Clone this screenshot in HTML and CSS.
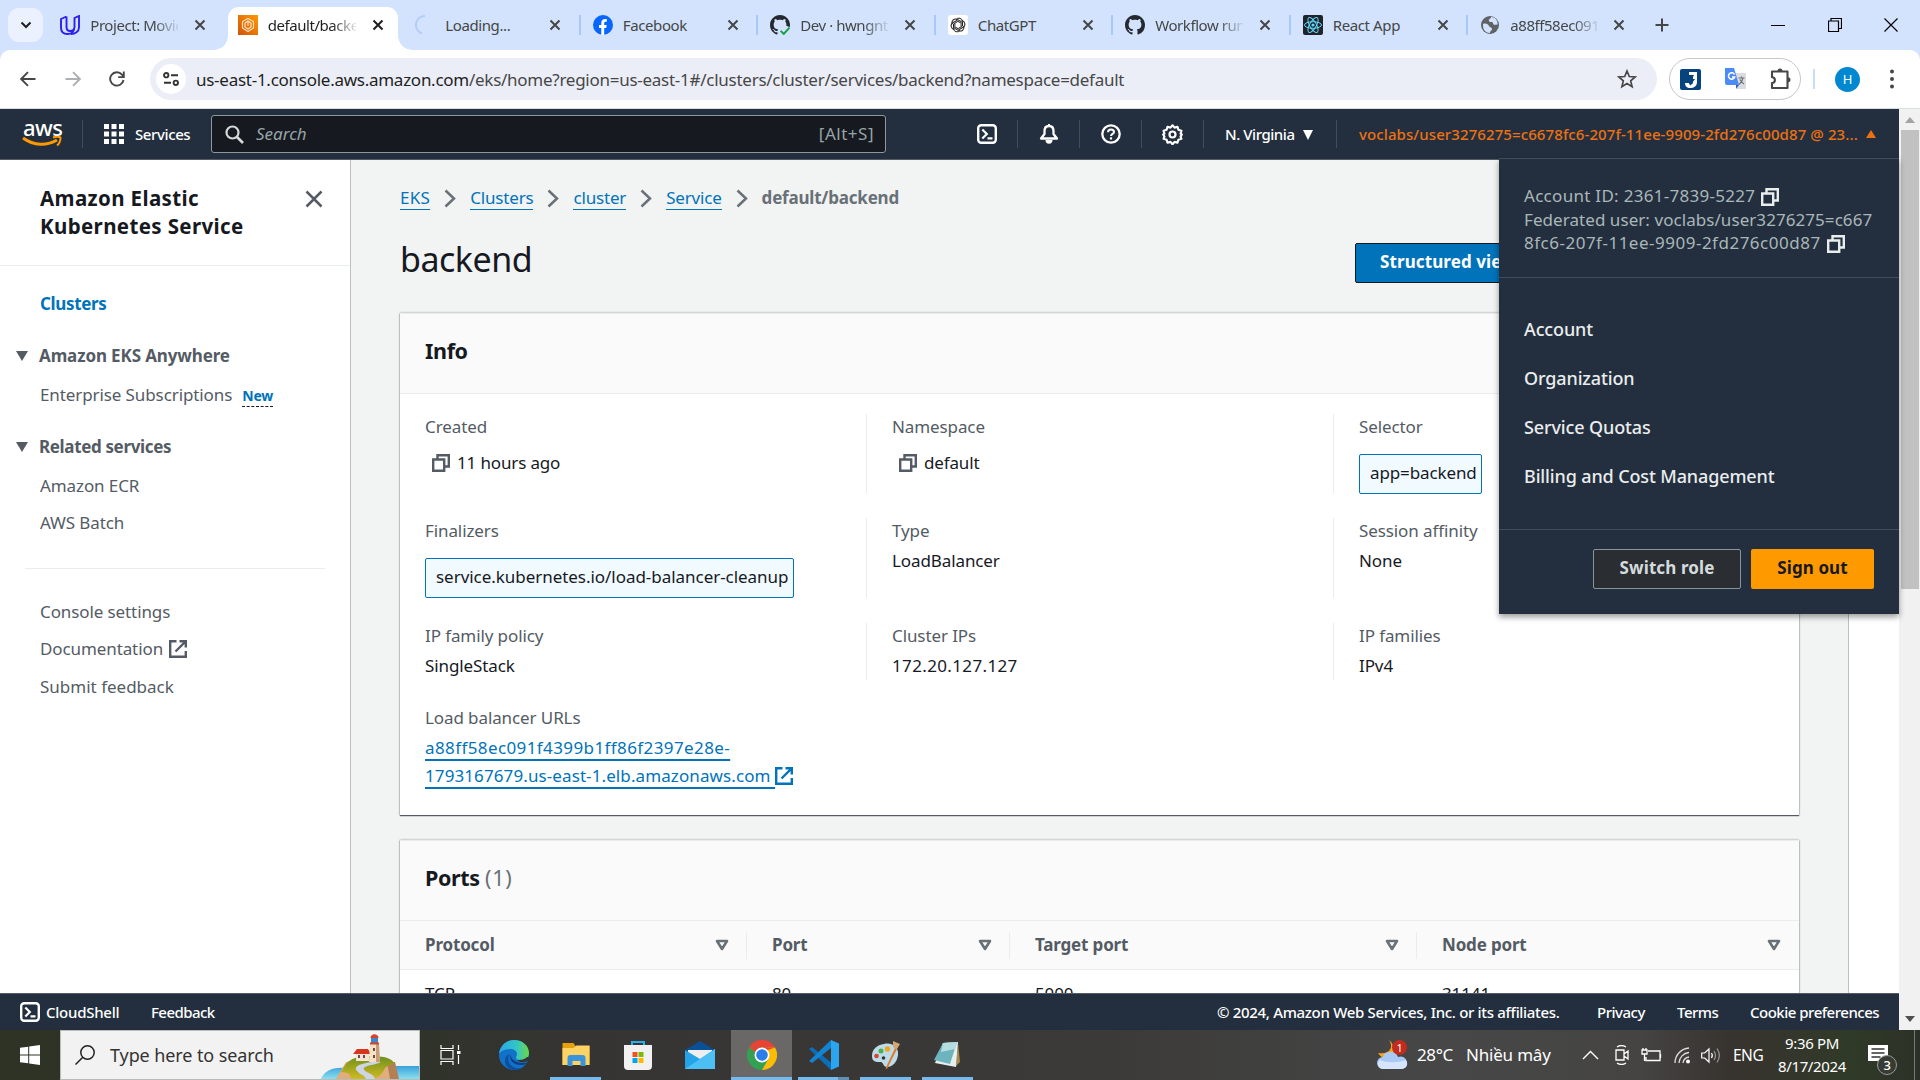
FILE: index.html
```
<!DOCTYPE html>
<html lang="en">
<head>
<meta charset="utf-8">
<title>default/backend</title>
<link rel="stylesheet" href="styles.css">
</head>
<body>
<svg class="defs" aria-hidden="true">
  <symbol id="x" viewBox="0 0 12 12"><path d="M1.500 1.500l9 9M10.500 1.500l-9 9" fill="none" stroke="currentColor" stroke-width="2"/></symbol>
  <symbol id="copy" viewBox="0 0 18 18"><path d="M1.200 5.500h11v11.300h-11zM5.500 5V1.200h11.300v11.300H13" fill="none" stroke="currentColor" stroke-width="2.400"/></symbol>
  <symbol id="ext" viewBox="0 0 18 18"><path d="M7.500 1.200H1.200v15.600h15.600V11M10.500 1.200h6.300v6.300M16.500 1.500L6.500 11.500" fill="none" stroke="currentColor" stroke-width="2.400"/></symbol>
  <symbol id="chev" viewBox="0 0 12 19"><path d="M1.500 1.500l8.500 8-8.500 8" fill="none" stroke="currentColor" stroke-width="2.500"/></symbol>
  <symbol id="sort" viewBox="0 0 14 12"><path d="M2 2h10L7 10z" fill="none" stroke="currentColor" stroke-width="2.600" stroke-linejoin="round"/></symbol>
  <symbol id="shell" viewBox="0 0 20 20"><rect x="1.200" y="1.200" width="17.600" height="17.600" rx="3" fill="none" stroke="currentColor" stroke-width="2.400"/><path d="M5.300 5.500l4.500 4.500-4.500 4.500M10.500 14.300h5" fill="none" stroke="currentColor" stroke-width="2.200"/></symbol>
  <symbol id="github" viewBox="0 0 16 16"><path fill="#24292f" d="M8 0C3.580 0 0 3.580 0 8c0 3.540 2.290 6.530 5.470 7.590.4.070.55-.17.55-.38 0-.19-.01-.82-.01-1.490-2.010.37-2.530-.49-2.690-.94-.09-.23-.48-.94-.82-1.130-.28-.15-.68-.52-.01-.53.63-.01 1.080.58 1.230.82.72 1.210 1.870.87 2.330.66.07-.52.28-.87.51-1.070-1.780-.2-3.640-.89-3.640-3.950 0-.87.31-1.590.82-2.150-.08-.2-.36-1.020.08-2.120 0 0 .67-.21 2.200.82.64-.18 1.320-.27 2-.27s1.360.09 2 .27c1.530-1.040 2.200-.82 2.200-.82.44 1.100.16 1.920.08 2.120.51.56.82 1.270.82 2.150 0 3.070-1.870 3.750-3.650 3.950.29.25.54.73.54 1.480 0 1.070-.01 1.930-.01 2.200 0 .21.15.46.55.38A8.010 8.010 0 0 0 16 8c0-4.420-3.580-8-8-8"/></symbol>
</svg>

<header class="tabstrip">
  <button class="tabsearch"><svg width="12" height="8" viewBox="0 0 12 8"><path d="M1.500 1.500L6 6l4.500-4.500" fill="none" stroke="#1f1f1f" stroke-width="2"/></svg></button>
  <nav class="tabs">
    <div class="tab"><span class="fav"><svg viewBox="0 0 20 20"><path d="M6.500 1.500L1 4v8.500C1 17 4 19 7.500 19c4 0 7-2.500 7-7V3L19 1v11.500c0 4-4 6.500-8 6.500M6.500 1.500V12c0 2.500 1.500 4 3.500 4s4.500-1.500 4.500-4" fill="none" stroke="#2d1ff0" stroke-width="1.900"/></svg></span><span class="tt fade">Project: Movie</span><svg class="tx"><use href="#x"/></svg></div>
    <div class="tab active"><span class="fav"><svg viewBox="0 0 20 20"><defs><linearGradient id="og" x2="1" y1="1" y2="0"><stop stop-color="#d0540c"/><stop offset="1" stop-color="#f90"/></linearGradient></defs><path fill="url(#og)" d="M0 0h20v20H0z"/><path d="M10 3.500l5.500 3v6.500L10 16.500 4.500 13V6.500zM10 6l-3 2v4l3 2 3-2V8zM10 6v5" fill="none" stroke="#ffe0bd" stroke-width="1.200"/></svg></span><span class="tt fade">default/backe</span><svg class="tx"><use href="#x"/></svg></div>
    <div class="tab"><span class="fav"><svg viewBox="0 0 20 20"><path d="M10 1A9 9 0 0 0 7 18.500" fill="none" stroke="#b3cdf8" stroke-width="2"/></svg></span><span class="tt">Loading...</span><svg class="tx"><use href="#x"/></svg></div>
    <div class="tab sep"><span class="fav"><svg viewBox="0 0 20 20"><circle cx="10" cy="10" r="10" fill="#0866ff"/><path fill="#fff" d="M8.300 20v-7H6v-3h2.300V8.300c0-3 1.500-4.300 4-4.300.8 0 1.200.1 1.500.2v2.600h-1.300c-1 0-1.300.6-1.300 1.600V10h2.500l-.5 3h-2v7z"/></svg></span><span class="tt">Facebook</span><svg class="tx"><use href="#x"/></svg></div>
    <div class="tab sep"><span class="fav"><svg viewBox="0 0 16 16"><use href="#github"/><circle cx="12.500" cy="13" r="4.500" fill="#d3e3fd"/><path d="M8.500 12.700l2.500 2.500 4.500-5" fill="none" stroke="#1a9f45" stroke-width="1.500"/></svg></span><span class="tt fade">Dev · hwngnt/</span><svg class="tx"><use href="#x"/></svg></div>
    <div class="tab sep"><span class="fav"><svg viewBox="0 0 20 20"><rect width="20" height="20" rx="3" fill="#fff"/><g fill="none" stroke="#222" stroke-width="1"><g id="pt"><path id="pe" d="M8 4.600a3.600 3.600 0 0 1 6.500 2v4.400L10.500 13.300"/><use href="#pe" transform="rotate(60 10 10)"/><use href="#pe" transform="rotate(120 10 10)"/></g><use href="#pt" transform="rotate(180 10 10)"/></g></svg></span><span class="tt">ChatGPT</span><svg class="tx"><use href="#x"/></svg></div>
    <div class="tab sep"><span class="fav"><svg><use href="#github"/></svg></span><span class="tt fade">Workflow runs</span><svg class="tx"><use href="#x"/></svg></div>
    <div class="tab sep"><span class="fav"><svg viewBox="0 0 20 20"><rect width="20" height="20" rx="2" fill="#20232a"/><g fill="none" stroke="#61dafb"><ellipse cx="10" cy="10" rx="8.500" ry="3.300"/><ellipse cx="10" cy="10" rx="8.500" ry="3.300" transform="rotate(60 10 10)"/><ellipse cx="10" cy="10" rx="8.500" ry="3.300" transform="rotate(120 10 10)"/></g><circle cx="10" cy="10" r="1.600" fill="#61dafb"/></svg></span><span class="tt">React App</span><svg class="tx"><use href="#x"/></svg></div>
    <div class="tab sep"><span class="fav"><svg viewBox="0 0 20 20"><circle cx="10" cy="10" r="9" fill="#5f6368"/><path d="M3 9c3-1 5 0 6 2s3 1 3 3-2 1.500-2 4c-4 0-7.500-3-7-9zM11 2c0 2-3 2-2 4s4 0 4 2 2 2 4.500 1.500C18 5 14.500 1.800 11 2z" fill="#d3e3fd"/></svg></span><span class="tt fade">a88ff58ec091f</span><svg class="tx"><use href="#x"/></svg></div>
  </nav>
  <button class="newtab"><svg width="14" height="14" viewBox="0 0 14 14"><path d="M7 .5v13M.5 7h13" stroke="#444746" stroke-width="2"/></svg></button>
  <div class="winctl">
    <svg width="14" height="14" viewBox="0 0 14 14"><path d="M0 7.500h14" stroke="#000"/></svg>
    <svg width="14" height="14" viewBox="0 0 14 14"><path d="M.5 3h10v10.500H.5zM3 3V.5h10.500v10H10.500" fill="none" stroke="#000" stroke-width="1.200"/></svg>
    <svg width="14" height="14" viewBox="0 0 14 14"><path d="M.5.5l13 13M13.500.5l-13 13" stroke="#000" stroke-width="1.200"/></svg>
  </div>
</header>

<div class="toolbar">
  <div class="nav">
    <svg width="16" height="16" viewBox="0 0 16 16"><path d="M15.500 8H1.500M8 1.200L1.200 8 8 14.800" fill="none" stroke="#474747" stroke-width="1.900"/></svg>
    <svg width="16" height="16" viewBox="0 0 16 16"><path d="M.5 8h14M8 1.200L14.800 8 8 14.800" fill="none" stroke="#adb0b3" stroke-width="1.900"/></svg>
    <svg width="16" height="16" viewBox="0 0 16 16"><path d="M14.500 9A6.700 6.700 0 1 1 13 3.600L14.500 5.500M14.800.5v5.600H9.200" fill="none" stroke="#474747" stroke-width="1.900"/></svg>
  </div>
  <div class="omni">
    <span class="site"><svg width="16" height="14" viewBox="0 0 16 14"><g fill="none" stroke="#333" stroke-width="1.900"><circle cx="3.200" cy="3.200" r="2.200"/><path d="M8 3.200h7M1 10.800h7"/><circle cx="12.800" cy="10.800" r="2.200"/></g></svg></span>
    <span class="url"><b>us-east-1.console.aws.amazon.com</b>/eks/home?region=us-east-1#/clusters/cluster/services/backend?namespace=default</span>
    <svg class="star" width="20" height="20" viewBox="0 0 20 20"><path d="M10 2l2.300 5.500 5.900.5-4.500 3.900 1.400 5.800L10 14.600l-5.100 3.100 1.400-5.800L1.800 8l5.900-.5z" fill="none" stroke="#474747" stroke-width="1.700"/></svg>
  </div>
  <div class="extpill">
    <svg width="21" height="21" viewBox="0 0 21 21"><rect width="21" height="21" rx="2" fill="#07437f"/><path d="M9 3h8v10c0 4-3 6-7 6-3 0-5-2-5-5h4c0 3 4 2 4-1V6H9z" fill="#fff"/><path d="M12 6l-4 6h3l-1 5 5-7h-3l2-4z" fill="#07437f"/></svg>
    <svg width="22" height="22" viewBox="0 0 22 22"><path d="M9 5h12v16H12z" fill="#dadce0"/><path d="M0 0h9l5 17H2a2 2 0 0 1-2-2z" fill="#4c8bf5"/><path d="M11 17h3l-3 4z" fill="#3a5bc7"/><path d="M9.500 6.500A3.200 3.200 0 1 0 9.700 9H7" fill="none" stroke="#fff" stroke-width="1.500"/><path d="M13.500 10h6M16.500 8.500V10M18 10c-.5 3-2 5-4 6.500M15 11.500c1 2 2.500 3.500 4 4.500" fill="none" stroke="#6b7177" stroke-width="1.200"/></svg>
    <svg width="22" height="22" viewBox="0 0 22 22"><path d="M2 3.500h15.500V20H2v-5a2.700 2.700 0 0 0 0-5.800z" fill="none" stroke="#474747" stroke-width="2.100" stroke-linejoin="round"/><path d="M7.500 3a2.500 2.500 0 0 1 5 0zM18 9.300a2.400 2.400 0 0 1 0 5z" fill="#474747"/></svg>
  </div>
  <i class="tsep"></i>
  <span class="avatar">H</span>
  <svg class="dots" width="4" height="20" viewBox="0 0 4 20"><g fill="#474747"><circle cx="2" cy="2.500" r="2"/><circle cx="2" cy="10" r="2"/><circle cx="2" cy="17.500" r="2"/></g></svg>
</div>

<div class="viewport">
<div class="page">
  <header class="aws">
    <div class="logo"><span>aws</span><svg width="40" height="12" viewBox="0 0 40 12"><path d="M1 2c11 8 24 8 34 2" fill="none" stroke="#f90" stroke-width="3"/><path d="M31 1.500c3-1 6-1 7.500 0 0 3-1 6-3.500 8" fill="none" stroke="#f90" stroke-width="2"/></svg></div>
    <i class="vs first"></i>
    <svg class="waffle" width="20" height="20" viewBox="0 0 20 20"><path fill="#fff" d="M0 0h5v5H0zM7.500 0h5v5h-5zM15 0h5v5h-5zM0 7.500h5v5H0zM7.500 7.500h5v5h-5zM15 7.500h5v5h-5zM0 15h5v5H0zM7.500 15h5v5h-5zM15 15h5v5h-5z"/></svg>
    <span class="services">Services</span>
    <div class="search"><svg width="19" height="19" viewBox="0 0 19 19"><circle cx="7.500" cy="7.500" r="6" fill="none" stroke="#d5dbdb" stroke-width="2.200"/><path d="M12 12l6 6" stroke="#d5dbdb" stroke-width="2.600"/></svg><em>Search</em><span>[Alt+S]</span></div>
    <div class="tools">
      <span><svg width="20" height="20"><use href="#shell"/></svg></span>
      <span><svg width="20" height="20" viewBox="0 0 20 20"><path d="M10 2c3 0 4.500 2 4.500 5v3l3.500 4.500H2L5.500 10V7c0-3 1.500-5 4.500-5z" fill="none" stroke="#fff" stroke-width="2.300" stroke-linejoin="round"/><path d="M6.500 16h7a3.500 3.800 0 0 1-7 0zM9 0h2v2H9z" fill="#fff"/></svg></span>
      <span><svg width="20" height="20" viewBox="0 0 20 20"><circle cx="10" cy="10" r="8.700" fill="none" stroke="#fff" stroke-width="2.300"/><path d="M7 8.200C7 6.300 8.300 5.400 10 5.400s3 1 3 2.500c0 2-3 2-3 4.100" fill="none" stroke="#fff" stroke-width="2"/><path d="M8.900 13.300h2.200v2.200H8.900z" fill="#fff"/></svg></span>
      <span><svg width="21" height="21" viewBox="0 0 21 21"><path d="M10.500 1.300l2 2.300 3-.8.900 3 3 .9-.8 3 1.200.8-1.200 2.100.8 2.200-3 .9-.9 3-3-.8-2 2.300-2-2.300-3 .8-.9-3-3-.9.800-2.200L1.200 10.500l1.200-.8-.8-3 3-.9.900-3 3 .8z" fill="none" stroke="#fff" stroke-width="2.200" stroke-linejoin="round"/><circle cx="10.500" cy="10.500" r="3" fill="none" stroke="#fff" stroke-width="2.200"/></svg></span>
    </div>
    <span class="region">N. Virginia</span><i class="tri down white"></i>
    <i class="vs last"></i>
    <span class="user">voclabs/user3276275=c6678fc6-207f-11ee-9909-2fd276c00d87 @ 23...</span><i class="tri up"></i>
  </header>

  <div class="body">
    <aside class="side">
      <div class="sidehead"><h2>Amazon Elastic<br>Kubernetes Service</h2><svg width="18" height="18" viewBox="0 0 18 18"><path d="M1.500 1.500l15 15M16.500 1.500l-15 15" stroke="#545b64" stroke-width="2.500"/></svg></div>
      <ul>
        <li class="on">Clusters</li>
        <li class="grp g1"><i class="tri down"></i>Amazon EKS Anywhere</li>
        <li class="sub">Enterprise Subscriptions<span class="new">New</span></li>
        <li class="grp g2"><i class="tri down"></i>Related services</li>
        <li class="sub">Amazon ECR</li>
        <li class="b">AWS Batch</li>
      </ul>
      <ul class="bottom">
        <li>Console settings</li>
        <li>Documentation<svg width="18" height="18"><use href="#ext"/></svg></li>
        <li>Submit feedback</li>
      </ul>
    </aside>

    <main>
      <nav class="crumbs"><a class="c1">EKS</a><svg><use href="#chev"/></svg><a>Clusters</a><svg><use href="#chev"/></svg><a>cluster</a><svg><use href="#chev"/></svg><a>Service</a><svg><use href="#chev"/></svg><strong>default/backend</strong></nav>
      <div class="titlebar"><h1>backend</h1><div class="acts"><button class="primary">Structured view</button></div></div>
      <section class="card info">
        <div class="cardhead"><h2>Info</h2></div>
        <div class="grid">
          <div class="row tall one"><div><label>Created</label><p class="cp"><svg><use href="#copy"/></svg>11 hours ago</p></div><div><label>Namespace</label><p class="cp"><svg><use href="#copy"/></svg>default</p></div><div><label>Selector</label><p class="token w1">app=backend</p></div></div>
          <div class="row tall"><div><label>Finalizers</label><p class="token">service.kubernetes.io/load-balancer-cleanup</p></div><div><label>Type</label><p>LoadBalancer</p></div><div><label>Session affinity</label><p>None</p></div></div>
          <div class="row"><div><label>IP family policy</label><p>SingleStack</p></div><div><label>Cluster IPs</label><p class="num">172.20.127.127</p></div><div><label>IP families</label><p>IPv4</p></div></div>
          <div class="row"><div><label>Load balancer URLs</label><p><a class="lb"><span>a88ff58ec091f4399b1ff86f2397e28e-</span><br>1793167679.us-east-1.elb.amazonaws.com </a><svg class="exticon"><use href="#ext"/></svg></p></div></div>
        </div>
      </section>
      <section class="card ports">
        <div class="cardhead"><h2>Ports <span>(1)</span></h2></div>
        <div class="tr th"><div>Protocol<svg><use href="#sort"/></svg></div><div>Port<svg><use href="#sort"/></svg></div><div>Target port<svg><use href="#sort"/></svg></div><div>Node port<svg><use href="#sort"/></svg></div></div>
        <div class="tr td"><div>TCP</div><div>80</div><div>5000</div><div>31141</div></div>
      </section>
    </main>
    <aside class="right"></aside>
  </div>

  <footer class="foot">
    <svg width="20" height="20"><use href="#shell"/></svg><span class="f1">CloudShell</span><span class="f2">Feedback</span>
    <span class="f3">© 2024, Amazon Web Services, Inc. or its affiliates.</span><span class="f4">Privacy</span><span class="f5">Terms</span><span class="f6">Cookie preferences</span>
  </footer>

  <div class="menu">
    <div class="acct"><div class="a1">Account ID: 2361-7839-5227<svg><use href="#copy"/></svg></div><div>Federated user: voclabs/user3276275=c667</div><div class="a3">8fc6-207f-11ee-9909-2fd276c00d87<svg><use href="#copy"/></svg></div></div>
    <ul><li>Account</li><li>Organization</li><li>Service Quotas</li><li>Billing and Cost Management</li></ul>
    <div class="mbtns"><button class="sw">Switch role</button><button class="so">Sign out</button></div>
  </div>
</div>
<div class="scroll"><i class="tri up"></i><div class="thumb"></div><i class="tri down"></i></div>
</div>

<footer class="taskbar">
  <div class="start"><svg width="20" height="20" viewBox="0 0 20 20"><path fill="#fff" d="M0 2.800L8.200 1.700v7.800H0zM9.200 1.500L20 0v9.500H9.200zM0 10.500h8.200v7.800L0 17.200zM9.200 10.500H20V20L9.200 18.500z"/></svg></div>
  <div class="tsearch">
    <svg width="20" height="20" viewBox="0 0 20 20"><circle cx="12.500" cy="7.500" r="6.700" fill="none" stroke="#222" stroke-width="1.500"/><path d="M7.800 12.200L.5 19.500" stroke="#222" stroke-width="1.500"/></svg>
    <span>Type here to search</span>
    <svg class="art" width="98" height="49" viewBox="0 0 98 49"><defs><linearGradient id="sea" x2="0" y2="1"><stop stop-color="#3aa0dc"/><stop offset="1" stop-color="#8be0ee"/></linearGradient><linearGradient id="hill" x2="0" y2="1"><stop stop-color="#6d8f1c"/><stop offset="1" stop-color="#d0bb22"/></linearGradient></defs><path d="M65 36h33v13H65zM0 49c3-7 10-12 24-11v11z" fill="url(#sea)"/><path d="M15 49l10-17 20-4 26 2 6 19z" fill="#dfae7c"/><path d="M66 32l3 17h9l-4-17z" fill="#b57f55"/><path d="M25 34c5-6 14-8 24-8 11 0 21 1 24 7-4 3-8 2-10 7-3 5-4 6-10 9H30c-1-6-2-6-10-7z" fill="url(#hill)"/><path d="M56 31c-12 2-25 4-20 10 3 4 8 4 9 8h9c-1-6-13-7-11-11 2-3 12-3 17-6z" fill="#cdd5e4"/><path d="M35 22h13v9H35z" fill="#f3e4d4"/><path d="M32 24l4-5h11l3 5z" fill="#d8351f"/><path d="M37 25h2v3h-2zM42 25h2v3h-2z" fill="#6a4a55"/><path d="M49 14h9l1 18H48z" fill="#f5e1c4"/><path d="M55 14h3l1 18h-4z" fill="#c99d79"/><path d="M50 8h7v5h-7z" fill="#3d87c8"/><path d="M49.500 8c0-5 8-5 8 0zM49 12.500h9v2h-9z" fill="#d9412c"/><path d="M52 18h2v3h-2zM52 25h2v3h-2z" fill="#6d4a3a"/></svg>
  </div>
  <div class="tv"><svg width="21" height="20" viewBox="0 0 21 20"><path d="M1 0v3.500h12V0M1 20v-3.500h12V20M1 5.500h12v8.500H1zM18.500 0v5M18.500 10v9" fill="none" stroke="#fff" stroke-width="1.200"/><path d="M17 6h3.500v3H17z" fill="#fff"/></svg></div>
  <div class="apps">
    <div><svg viewBox="0 0 30 30"><defs><linearGradient id="e1" x2="1"><stop stop-color="#2aa5e8"/><stop offset=".6" stop-color="#33c6c3"/><stop offset="1" stop-color="#6bd845"/></linearGradient></defs><circle cx="15" cy="15" r="15" fill="#1272c8"/><path d="M0 14C1 5 8 0 15 0c9 0 15 6 15 13 0 5-4 7-8 7-3 0-5-1-5-2 0-2 1-2 1-4 0-3-3-5-7-5-6 0-10 3-11 5z" fill="url(#e1)"/><path d="M10 15c-3 8 4 15 13 13-9 5-17 0-17-7 0-4 2-6 5-7z" fill="#0c4f9e"/><path d="M12 14c-3 6 3 12 12 11 2 0 5-3 5-3-1 1-4 1-7 1-7-1-11-5-10-9z" fill="#0a3f85"/><path d="M18 20c3 3 8 3 11.500.5l1.500-3-3-.500c-3 3-7 3-10 3z" fill="#353533"/></svg></div>
    <div class="run"><svg viewBox="0 0 30 30"><path d="M1.500 3h11l2 3h14v19h-27z" fill="#e5a00d"/><path d="M1.500 8h11l3-2.500h13V25h-27z" fill="#fdd365"/><path d="M6.500 26V18a3 3 0 0 1 3-3h12a3 3 0 0 1 3 3v8h-5v-5h-8v5z" fill="#3b93dc"/></svg></div>
    <div><svg viewBox="0 0 30 30"><path d="M9 6V2h12v4" fill="none" stroke="#27b0ee" stroke-width="2"/><path d="M1 5h28v21a4 4 0 0 1-4 4H5a4 4 0 0 1-4-4z" fill="#f1f1f1"/><path d="M9.500 12h5v5h-5z" fill="#f25022"/><path d="M15.500 12h5v5h-5z" fill="#7fba00"/><path d="M9.500 18h5v5h-5z" fill="#00a4ef"/><path d="M15.500 18h5v5h-5z" fill="#ffb900"/></svg></div>
    <div><svg viewBox="0 0 30 30"><path d="M0 10L15 1l15 9v4H0z" fill="#0b4f94"/><path d="M3 10h24v8l-12 5-12-5z" fill="#eee"/><path d="M0 10l15 9L30 9v20H0z" fill="#25a3e8"/><path d="M0 29l15-10 15-10v20z" fill="#4cc0f4"/></svg></div>
    <div class="run cur"><svg viewBox="0 0 30 30"><path d="M2 7.500A15 15 0 0 1 28 7.500L15 9z" fill="#ea4335"/><path d="M28 7.500A15 15 0 0 1 15 30l-2-6 7-7-5-9.500z" fill="#fbbc04"/><path d="M2 7.500A15 15 0 0 0 15 30l6.500-11.300L9 18z" fill="#34a053"/><path d="M2 7.500L8.500 18.800 15 16l6-8.500H8z" fill="#34a053"/><path d="M2 7.500h26L15 12l-5 1z" fill="#ea4335"/><circle cx="15" cy="15" r="7.500" fill="#fff"/><circle cx="15" cy="15" r="5.800" fill="#2b7de9"/></svg></div>
    <div class="run two"><svg viewBox="0 0 30 30"><path d="M22 0l8 3.500v23L22 30z" fill="#2ba5ee"/><path d="M0 9l3-2 19 15.500V30z" fill="#0a6fb8"/><path d="M0 21L22 0v8L3 23z" fill="#1484d0"/></svg></div>
    <div class="run"><svg viewBox="0 0 30 30"><path d="M13 4c9-2 15 4 14 11-1 8-6 12-11 12-4 0-3-4-6-5-5 0-9 0-9-6C1 9 6 5 13 4z" fill="#bcdcea"/><circle cx="5.500" cy="16" r="2.300" fill="#d9442f"/><circle cx="10" cy="11" r="2.500" fill="#4caf50"/><circle cx="16.500" cy="9" r="2.700" fill="#f3a51c"/><circle cx="12.500" cy="18" r="1.800" fill="#333"/><path d="M24 8l2 1-10 20-1.500-.5z" fill="#e07a28"/><path d="M22 1l7 3-3 5-4-2z" fill="#d6a574"/></svg></div>
    <div class="run"><svg viewBox="0 0 30 30"><path d="M25 3l2 19-4 4z" fill="#a88a4a"/><path d="M10 3l15-1-2 25-21-4z" fill="#e8eeee"/><path d="M10 3l14-1-7 22L1 20z" fill="#6db4bf"/><path d="M10 3l14-1-2 7-14 3z" fill="#b5dde0"/></svg></div>
  </div>
  <div class="tray">
    <span class="wx"><svg width="31" height="30" viewBox="0 0 31 30"><path d="M12 0c5 7 1 15-11 13 3 5 9 7 13 4s4-13-2-17z" fill="#f5a623"/><path d="M6 29a6 6 0 0 1 0-12c1-4 4-5 8-5s6 2 7 5c5-2 9 2 9 6s-3 6-6 6z" fill="#a9c9f7"/><path d="M6 29a5 5 0 0 1-3-9c6 3 18 3 26 0 3 5 0 9-5 9z" fill="#d7e5fc"/></svg><b>1</b></span>
    <span class="temp">28°C</span><span class="cond">Nhiều mây</span>
    <svg class="i1" width="17" height="10" viewBox="0 0 17 10"><path d="M1 9l7.500-7.500L16 9" fill="none" stroke="#fff" stroke-width="1.400"/></svg>
    <svg class="i2" width="14" height="20" viewBox="0 0 14 20"><path d="M1 5h8v10H1zM9 9l4-3v8l-4-3M2 2c3-2 6-2 9 0M2 18c3 2 6 2 9 0" fill="none" stroke="#fff" stroke-width="1.300"/></svg>
    <svg class="i3" width="21" height="14" viewBox="0 0 21 14"><path d="M7 3h12v9.500H5V9M19.500 6v4M1 2h5v4H1zM2 0v2M5 0v2M3.500 6v7" fill="none" stroke="#fff" stroke-width="1.300"/></svg>
    <svg class="i4" width="17" height="17" viewBox="0 0 17 17"><g fill="none" stroke="#ddd" stroke-width="1.300"><path d="M1 16A15 15 0 0 1 15 1M5 16A11 11 0 0 1 15 5.500M9 16a7 7 0 0 1 6-6"/></g><circle cx="14" cy="14.500" r="2" fill="#fff"/></svg>
    <svg class="i5" width="20" height="17" viewBox="0 0 20 17"><path d="M.7 6h3L8 2v13l-4.300-4h-3zM10.500 6c1 1.500 1 3.500 0 5" fill="none" stroke="#fff" stroke-width="1.200"/><path d="M13 4c2 3 2 6 0 9M16 1.500c3 4.500 3 9.500 0 14" fill="none" stroke="#999" stroke-width="1.200"/></svg>
    <span class="lang">ENG</span>
    <div class="clock"><span>9:36 PM</span><span>8/17/2024</span></div>
    <span class="notif"><svg width="21" height="21" viewBox="0 0 21 21"><path d="M0 0h20v16h-5l-5 5v-5H0z" fill="#fff"/><path d="M3.500 4h13M3.500 8h13M3.500 12h9" stroke="#333" stroke-width="1.300"/></svg><b>3</b></span>
    <i class="peek"></i>
  </div>
</footer>
</body>
</html>
```
FILE: styles.css
```
*{box-sizing:border-box;margin:0;padding:0}
body{width:1920px;height:1080px;overflow:hidden;display:flex;flex-direction:column;font:17px/28px "Noto Sans","Open Sans",sans-serif;letter-spacing:-.1px;color:#16191f;background:#d3e3fd}
button{font:inherit;letter-spacing:inherit;border:0;background:none}
ul{list-style:none}
svg{flex:none;display:block}
.defs{position:absolute;width:0;height:0}
.tri{flex:none;width:0;height:0;border:6px solid transparent}
.tri.down{border-bottom:0;border-top:10px solid #545b64}
.tri.up{border-top:0;border-bottom:8px solid #ec7211}
.tri.white{border-top-color:#fff;border-left-width:5px;border-right-width:5px}

/* browser chrome */
.tabstrip{height:50px;flex:none;display:flex;align-items:center;padding-left:8px;font-size:15px;letter-spacing:-.4px;color:#444746}
.tabsearch{width:35px;height:34px;border-radius:11px;background:#ebf1fe;display:flex;align-items:center;justify-content:center;margin-right:3.300px}
.tabs{display:flex;height:50px}
.tab{width:177.500px;display:flex;align-items:center;padding-left:14px;position:relative}
.tab:last-child{width:176px}
.sep{background:linear-gradient(#a8c7fa,#a8c7fa) 0 50%/2px 20px no-repeat}
.fav,.fav svg{width:20px;height:20px}
.tt{width:88px;margin-left:10px;overflow:hidden;white-space:nowrap}
.fade{-webkit-mask:linear-gradient(90deg,#000 72%,rgba(0,0,0,.1));mask:linear-gradient(90deg,#000 72%,rgba(0,0,0,.1));letter-spacing:-.45px}
.tx{width:12px;height:12px;margin-left:16px}
.tab:last-child .tx{margin-left:15px}
.active{color:#1f1f1f}
.active::before{content:"";position:absolute;left:4px;top:7px;width:170px;height:43px;background:#fff;border-radius:11px 11px 0 0}
.active::after{content:"";position:absolute;left:-10px;bottom:0;width:198px;height:14px;background:radial-gradient(circle at 0 0,transparent 13.500px,#fff 14px) 0 0/14px 14px no-repeat,radial-gradient(circle at 100% 0,transparent 13.500px,#fff 14px) 100% 0/14px 14px no-repeat}
.active>*{position:relative;z-index:1}
.newtab{margin-left:13px}
.winctl{margin-left:auto;display:flex;gap:42.500px;padding-right:22px}
.toolbar{height:59px;flex:none;display:flex;align-items:center;background:#fff;border-bottom:1px solid #dadfe0;border-radius:10px 10px 0 0}
.nav{display:flex;gap:28.500px;padding-left:20px;width:150px}
.omni{width:1507px;height:42px;border-radius:21px;background:#ebeef7;display:flex;align-items:center;padding-left:6px}
.site{width:30px;height:30px;border-radius:50%;background:#fff;display:flex;align-items:center;justify-content:center}
.url{margin-left:10px;font-size:17px;letter-spacing:-.265px;color:#474747;white-space:nowrap;padding-top:1px}
.url b{font-weight:400;color:#1f1f1f}
.star{margin-left:auto;margin-right:20px}
.extpill{width:132px;height:42px;border:1px solid #c4c7c9;border-radius:21px;margin-left:12px;display:flex;align-items:center;gap:23.500px;padding-left:10px}
.tsep{width:2px;height:20px;background:#c7dbfc;margin-left:12px}
.avatar{width:25px;height:25px;border-radius:50%;background:#0288d1;color:#fff;font-size:13px;line-height:25px;text-align:center;margin-left:20px}
.dots{margin-left:30px}

/* AWS header */
.viewport{height:921px;flex:none;display:flex;background:#fff}
.page{width:1899px;height:921px;position:relative;display:flex;flex-direction:column}
.aws{height:51px;flex:none;background:#232f3e;border-bottom:1px solid #545b64;display:flex;align-items:center;color:#fff;font-size:15px;font-weight:500;letter-spacing:-.4px;white-space:nowrap}
.logo{width:40px;margin-left:22px;font-size:22px;line-height:15px;letter-spacing:-.5px}
.logo span{display:block;padding-left:1px;height:17px;line-height:12px}
.logo svg{margin-top:-2px}
.vs{width:1px;height:28px;background:#414d5c}
.first{margin-left:20px}
.waffle{margin-left:21px}
.services{margin-left:11px;width:76px}
.search{width:675px;height:38px;background:#16191f;border:1px solid #8d9a9b;border-radius:3px;display:flex;align-items:center;padding:0 11px 0 13px;font-size:17px;font-weight:400;color:#95a5a6}
.search em{margin-left:12px;letter-spacing:0}
.search span{margin-left:auto;letter-spacing:.5px}
.tools{display:flex;margin-left:70px}
.tools span{width:62px;height:28px;display:flex;align-items:center;justify-content:center;border-right:1px solid #414d5c}
.region{margin-left:21px;width:70px;letter-spacing:-.45px}
.region+.tri{margin-left:8px;margin-top:1px}
.last{margin-left:23px}
.user{margin-left:22px;width:500px;color:#ec7211;letter-spacing:.1px}
.user+.tri{margin-left:7px;border-left-width:5px;border-right-width:5px}

/* sidebar */
.body{flex:1;min-height:0;display:flex;overflow:hidden}
.side{width:351px;flex:none;border-right:1px solid #b9c1c2;box-shadow:1px 0 1px #d5dbdb;color:#545b64}
.sidehead{display:flex;height:106px;border-bottom:1px solid #eaeded;padding:24px 27px 0 40px;justify-content:space-between}
.sidehead h2{font-size:20.500px;line-height:28px;color:#16191f;letter-spacing:.37px}
.sidehead svg{margin-top:6px}
.side li{padding-left:40px;height:28px;display:flex;align-items:center;margin-top:9.500px}
.side .on{font-weight:700;color:#0073bb;margin-top:24px;letter-spacing:-.35px}
.side .grp{font-weight:700;padding-left:16px;margin-top:24px;letter-spacing:-.13px}
.side .g2{letter-spacing:-.35px}
.grp .tri{margin-right:11px}
.side .sub{margin-top:11px}
.side .b{margin-top:9px}
.new{margin-left:10px;color:#0073bb;font-size:14px;font-weight:700;line-height:21px;border-bottom:1px dashed #16191f;margin-top:2px;letter-spacing:-.2px}
.bottom{margin:31px 25px 0;border-top:1px solid #eaeded;padding-top:29px}
.side .bottom li{padding-left:15px}
.side .bottom li:first-child{margin-top:0}
.side .bottom li:nth-child(2){margin-top:9px}
.side .bottom li:nth-child(3){margin-top:10px;letter-spacing:0}
.bottom svg{margin-left:6px}

/* content */
main{width:1497px;flex:none;background:#f2f3f3;padding:24px 49px 0}
.crumbs{display:flex;align-items:center;height:28px}
.crumbs a{color:#0073bb;border-bottom:1.500px solid #0073bb;line-height:23px;letter-spacing:-.18px}
.crumbs .c1{letter-spacing:.3px}
.crumbs svg{width:12px;height:19px;margin:1px 14px 0;color:#687078}
.crumbs strong{color:#687078;letter-spacing:-.2px}
.titlebar{height:101px;display:flex;justify-content:space-between;padding-top:25px}
h1{font-size:34px;line-height:44px;font-weight:400;letter-spacing:-.5px}
.acts{width:444px;padding-top:6px}
.primary{width:178px;height:40px;background:#0073bb;border:1px solid #16191f;border-radius:2px;color:#fff;font-weight:700;line-height:34px;letter-spacing:.1px;padding:0 0 3px 24px;text-align:left;display:block;white-space:nowrap}
.card{background:#fff;border-top:1px solid #eaeded;box-shadow:0 1px 1px #535d66,0 0 2px #8c9699;margin-bottom:25px}
.cardhead{height:80px;background:#fafafa;border-bottom:1px solid #eaeded;padding:22px 25px}
.cardhead h2{font-size:21.500px;line-height:30px;letter-spacing:-.35px}
.cardhead span{font-weight:400;color:#687078;letter-spacing:.8px}
.grid{padding:20px 0 25px;display:flex;flex-direction:column;gap:25px}
.row{display:grid;grid-template-columns:466px 467px 466px}
.row>div{padding-left:25px;height:57px}
.row.tall>div{height:80px}
.row.one>div{height:79px}
.row>div+div{border-left:1px solid #eaeded}
.row:last-child>div{height:85px}
label{display:block;color:#545b64;line-height:25px}
.row p{line-height:28px;margin-top:4px}
.cp{display:flex;align-items:center;padding-left:7px}
.row .cp{margin-top:10px;letter-spacing:-.15px}
.cp svg{width:18px;height:18px;margin:0 7px 0 0;color:#545b64}
.row .token{width:369px;height:40px;margin-top:15px;border:1px solid #0073bb;border-radius:2px;background:#f1faff;padding-left:10px;line-height:36px;letter-spacing:-.04px;white-space:nowrap}
.row .w1{width:123px;letter-spacing:-.12px}
.row .num{letter-spacing:.36px}
.lb{color:#0073bb;text-decoration:underline;text-decoration-thickness:1.500px;text-underline-offset:5px;letter-spacing:.1px;text-decoration-skip-ink:none;white-space:break-spaces}
.lb span{letter-spacing:.4px}
.exticon{display:inline-block;vertical-align:-3px;width:18px;height:18px;color:#0073bb}
.tr{display:grid;grid-template-columns:346px 263px 407px 383px}
.th{height:49px;background:#fafafa;border-bottom:1px solid #eaeded;align-items:center;color:#545b64;font-weight:700;letter-spacing:-.17px}
.tr>div{padding-left:25px;padding-right:17px;display:flex;align-items:center;justify-content:space-between;height:27px}
.tr>div:last-child{padding-right:18px}
.th>div+div{border-left:1px solid #eaeded}
.td>div+div{padding-left:26px}
.th svg{width:14px;height:12px;color:#687078}
.td{padding-top:10px}
.right{flex:1;background:#fff;border-left:1px solid #b9c1c2}

.foot{height:37px;flex:none;background:#232f3e;border-top:1px solid #545b64;color:#fff;display:flex;align-items:center;padding-left:20px;font-size:15px;font-weight:500;letter-spacing:-.32px;white-space:nowrap}
.f1{margin-left:6px;width:105px;letter-spacing:-.25px}
.f2{letter-spacing:-.55px}
.f3{margin-left:auto;width:380px}
.f4{width:80px;letter-spacing:-.5px}
.f5{width:73px;letter-spacing:-.5px}
.f6{width:149px;letter-spacing:-.5px}

/* account menu */
.menu{position:absolute;right:0;top:49px;width:400px;height:456px;background:#232f3e;border-top:1px solid #414d5c;box-shadow:0 3px 6px rgba(0,0,0,.4);color:#eaeded}
.acct{height:119px;border-bottom:1px solid #414d5c;padding:25px 0 0 25px;line-height:23.500px;color:#aab7b8;white-space:nowrap;letter-spacing:.06px}
.acct div{display:flex;align-items:center}
.acct .a1{letter-spacing:.29px}
.acct .a3{letter-spacing:.5px}
.acct svg{width:18px;height:18px;margin:2px 0 0 6px;color:#eaeded}
.menu ul{height:252px;border-bottom:1px solid #414d5c;padding:27px 0 0 25px}
.menu li{height:49px;line-height:48px;font-size:18px;font-weight:500;letter-spacing:-.13px}
.mbtns{display:flex;gap:10px;justify-content:flex-end;padding:19px 25px}
.mbtns button{height:40px;border-radius:2px;font-weight:700;line-height:34px;padding-bottom:3px;letter-spacing:.1px}
.sw{width:148px;border:1px solid #879596;background:#2a2e33;color:#d5dbdb}
.so{width:123px;background:#f90;color:#16191f}

.scroll{width:21px;background:#f1f1f1;display:flex;flex-direction:column;align-items:center}
.scroll .tri.up{margin-top:8px;border-width:0 5px 6px;border-bottom-color:#a3a3a3}
.thumb{width:18px;height:459px;background:#c1c1c1;margin:7px 0 auto 1px}
.scroll .tri.down{border-width:6px 5px 0;border-top-color:#505050;margin-bottom:8px}

/* taskbar */
.taskbar{height:50px;flex:none;display:flex;align-items:center;color:#fff;background:linear-gradient(90deg,#2e3325 0,#30332a 420px,#353432 560px,#3b3a39 1100px,#474747 1450px,#454443 1640px,#38332f 1730px,#303a28 1850px,#2c3127)}
.start{width:60px;padding-left:20px}
.tsearch{width:360px;height:50px;background:#f2f2f2;border:1px solid #b8bbb8;color:#333;display:flex;align-items:center;padding-left:14px;font-size:18px;letter-spacing:-.1px}
.tsearch span{margin-left:15px;white-space:nowrap}
.art{margin-left:auto;align-self:flex-end}
.tv{width:63px;padding-left:20px}
.apps{display:flex}
.apps>div{width:62px;height:50px;padding:10px 16px;background-repeat:no-repeat}
.apps svg{width:30px;height:30px}
.run{background:linear-gradient(#76b9ed,#76b9ed) 5px 100%/51px 3px no-repeat}
.apps .cur{background:linear-gradient(#76b9ed,#76b9ed) 0 100%/61px 3px no-repeat,linear-gradient(#696867,#696867) 0 0/61px 50px no-repeat}
.apps .two{background:linear-gradient(90deg,#76b9ed 40px,#5f8fb5 40px) 5px 100%/51px 3px no-repeat}
.tray{margin-left:auto;width:543px;height:50px;display:flex;align-items:center;font-size:17px;letter-spacing:-.5px;white-space:nowrap}
.wx{position:relative;width:40px}
.wx b{position:absolute;left:15px;top:0;width:15px;height:15px;border-radius:50%;background:#c42b1c;font:400 11px/15px "Noto Sans",sans-serif;text-align:center}
.temp{width:49px;letter-spacing:-.4px}
.cond{width:116px;letter-spacing:-.2px}
.i2{margin-left:16px}.i3{margin-left:12px}.i4{margin-left:12px}.i5{margin-left:10px}
.lang{margin-left:12px;font-size:15.500px;width:30px}
.clock{margin-left:14px;width:70px;display:flex;flex-direction:column;align-items:center;font-size:15px;line-height:23px;letter-spacing:-.35px}
.notif{position:relative;margin-left:21px;width:21px}
.notif b{position:absolute;left:9px;top:10px;width:20px;height:20px;border-radius:50%;background:#383b33;border:1px solid #999;font:500 13px/18px "Noto Sans",sans-serif;text-align:center}
.peek{width:1px;height:50px;background:#777;margin-left:25px}
```
